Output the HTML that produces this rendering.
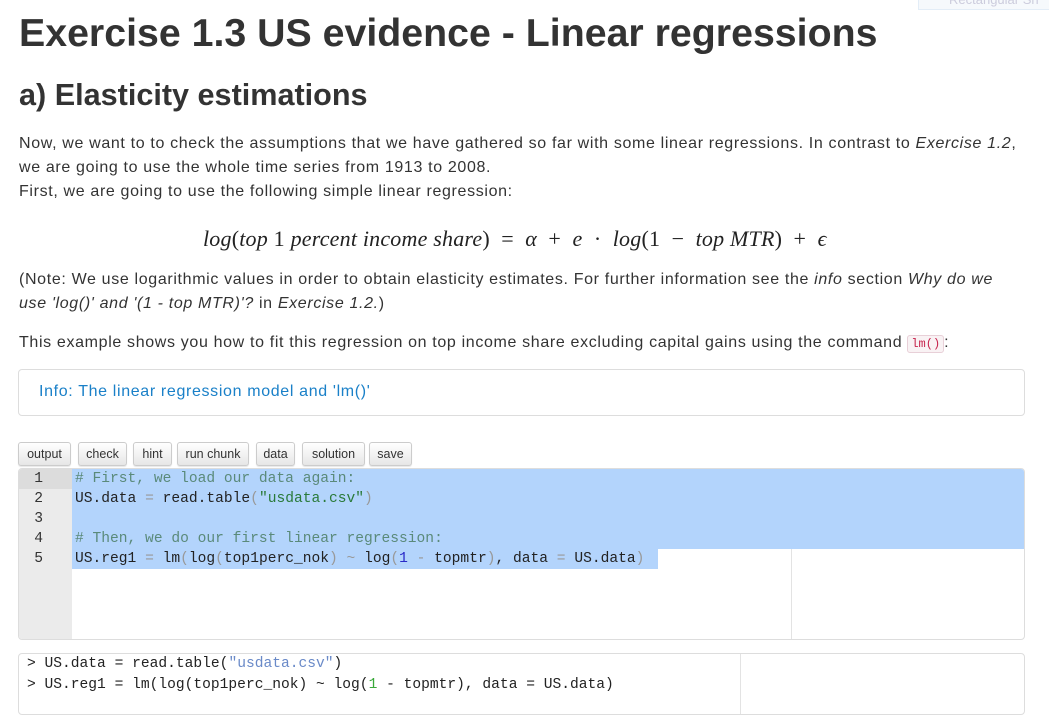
<!DOCTYPE html>
<html><head><meta charset="utf-8"><style>
body{margin:0;width:1049px;height:706px;overflow:hidden;background:#fff;font-family:"Liberation Sans",sans-serif;color:#333;position:relative}
.a{position:absolute;white-space:nowrap}
h1{position:absolute;left:19px;top:11px;margin:0;font-size:39.3px;font-weight:bold;color:#333}
h2{position:absolute;left:19px;top:78px;margin:0;font-size:30.6px;font-weight:bold;color:#333}
p{margin:0;font-size:16px;line-height:24px;letter-spacing:0.65px}
.btn{position:absolute;top:442px;height:22px;border:1px solid #ccc;border-radius:3px;background:linear-gradient(#fff,#e6e6e6);font-size:12.5px;line-height:22px;text-align:center;color:#333;box-shadow:0 1px 1px rgba(0,0,0,.1)}
.code{font-family:"Liberation Mono",monospace;font-size:14.6px}
.cm{color:#5a8a7a}.st{color:#2a7a3a}.op{color:#999}.nm{color:#2929c8}
</style></head><body>
<div class="a" style="left:918px;top:-8px;width:140px;height:16px;border:1px solid #e3edf7;background:#f6f9fc;color:#ccd;font-size:13px;padding-left:30px;line-height:14px">Rectangular Sn</div>
<h1>Exercise 1.3 US evidence - Linear regressions</h1>
<h2>a) Elasticity estimations</h2>
<div class="a" style="left:19px;top:132px"><p>Now, we want to to check the assumptions that we have gathered so far with some linear regressions. In contrast to <i>Exercise 1.2</i>,<br>we are going to use the whole time series from 1913 to 2008.<br>First, we are going to use the following simple linear regression:</p></div>
<div class="a" style="left:203px;top:226px;font-family:'Liberation Serif',serif;font-size:22px;color:#222;letter-spacing:0.2px;word-spacing:0px"><i>log</i>(<i>top</i> 1 <i>percent income share</i>) &nbsp;= &nbsp;<i>α</i> &nbsp;+ &nbsp;<i>e</i> &nbsp;· &nbsp;<i>log</i>(1 &nbsp;− &nbsp;<i>top MTR</i>) &nbsp;+ &nbsp;<i>ϵ</i></div>
<div class="a" style="left:19px;top:268px"><p>(Note: We use logarithmic values in order to obtain elasticity estimates. For further information see the <i>info</i> section <i>Why do we</i><br><i>use 'log()' and '(1 - top MTR)'?</i> in <i>Exercise 1.2.</i>)</p></div>
<div class="a" style="left:19px;top:331px"><p>This example shows you how to fit this regression on top income share excluding capital gains using the command <span style="font-family:'Liberation Mono',monospace;font-size:12px;color:#c7254e;background:#f9f2f4;border:1px solid #e8d0d8;border-radius:3px;padding:1px 3px;letter-spacing:0">lm()</span>:</p></div>
<div class="a" style="left:18px;top:369px;width:1005px;height:45px;border:1px solid #ddd;border-radius:4px"></div>
<div class="a" style="left:39px;top:380px"><p style="color:#1a80c8">Info: The linear regression model and 'lm()'</p></div>
<div class="btn" style="left:18px;width:51px">output</div>
<div class="btn" style="left:78px;width:47px">check</div>
<div class="btn" style="left:133px;width:37px">hint</div>
<div class="btn" style="left:177px;width:70px">run chunk</div>
<div class="btn" style="left:256px;width:37px">data</div>
<div class="btn" style="left:302px;width:61px">solution</div>
<div class="btn" style="left:369px;width:41px">save</div>
<div class="a" style="left:18px;top:468px;width:1005px;height:170px;border:1px solid #ddd;border-radius:4px;overflow:hidden">
 <div class="a" style="left:0;top:0;width:53px;height:170px;background:#ebebeb"></div>
 <div class="a" style="left:0;top:0;width:53px;height:20px;background:#dcdcdc"></div>
 <div class="a" style="left:53px;top:0;width:952px;height:80px;background:#b3d4fc"></div>
 <div class="a" style="left:53px;top:80px;width:586px;height:20px;background:#b3d4fc"></div>
 <div class="a" style="left:772px;top:80px;width:1px;height:90px;background:#e3e3e3"></div>
 <div class="a code" style="left:0;top:0;width:24px;text-align:right;line-height:20px;color:#333">1<br>2<br>3<br>4<br>5</div>
 <div class="a code" style="left:56px;top:0;line-height:20px;color:#222"><span class="cm"># First, we load our data again:</span><br>US.data <span class="op">=</span> read.table<span class="op">(</span><span class="st">"usdata.csv"</span><span class="op">)</span><br>&nbsp;<br><span class="cm"># Then, we do our first linear regression:</span><br>US.reg1 <span class="op">=</span> lm<span class="op">(</span>log<span class="op">(</span>top1perc_nok<span class="op">)</span> <span class="op">~</span> log<span class="op">(</span><span class="nm">1</span> <span class="op">-</span> topmtr<span class="op">)</span>, data <span class="op">=</span> US.data<span class="op">)</span></div>
</div>
<div class="a" style="left:18px;top:653px;width:1005px;height:60px;border:1px solid #ddd;border-radius:4px;overflow:hidden">
 <div class="a" style="left:721px;top:0;width:1px;height:60px;background:#e3e3e3"></div>
 <div class="a code" style="left:8px;top:0;line-height:21px;color:#222">&gt; US.data = read.table(<span style="color:#6a8ac8">"usdata.csv"</span>)<br>&gt; US.reg1 = lm(log(top1perc_nok) ~ log(<span style="color:#3aa83a">1</span> - topmtr), data = US.data)</div>
</div>
</body></html>
